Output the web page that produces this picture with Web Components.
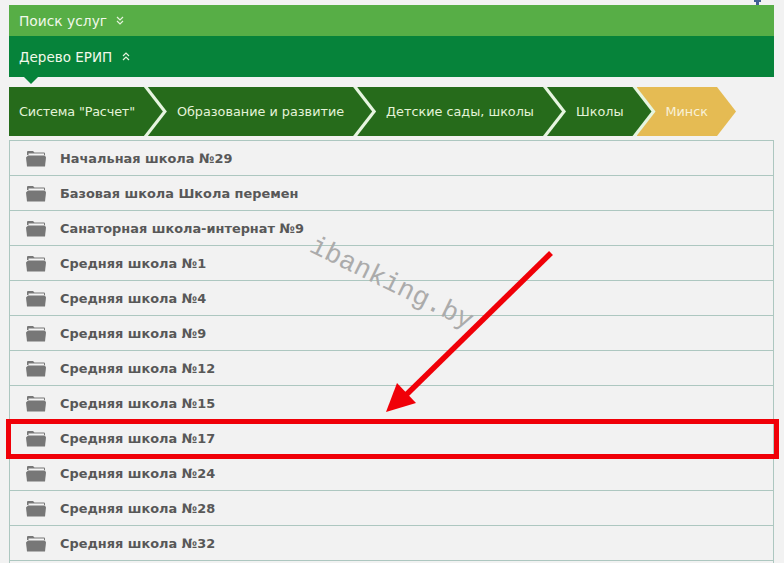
<!DOCTYPE html>
<html lang="ru">
<head>
<meta charset="utf-8">
<title>Дерево ЕРИП</title>
<style>
  html, body { margin: 0; height: 563px; overflow: hidden; background: #f2f2f2; }
  body { font-family: "DejaVu Sans", Verdana, sans-serif; }
</style>
</head>
<body>
<erip-page>
  <erip-bar slot="bars" tone="light" dir="down">Поиск услуг</erip-bar>
  <erip-bar slot="bars" tone="dark" dir="up" pointer>Дерево ЕРИП</erip-bar>
  <erip-crumbs slot="crumbs">
    <erip-crumb first>Система "Расчет"</erip-crumb>
    <erip-crumb>Образование и развитие</erip-crumb>
    <erip-crumb>Детские сады, школы</erip-crumb>
    <erip-crumb>Школы</erip-crumb>
    <erip-crumb current>Минск</erip-crumb>
  </erip-crumbs>
  <erip-list slot="list">
    <erip-row>Начальная школа №29</erip-row>
    <erip-row>Базовая школа Школа перемен</erip-row>
    <erip-row>Санаторная школа-интернат №9</erip-row>
    <erip-row>Средняя школа №1</erip-row>
    <erip-row>Средняя школа №4</erip-row>
    <erip-row>Средняя школа №9</erip-row>
    <erip-row>Средняя школа №12</erip-row>
    <erip-row>Средняя школа №15</erip-row>
    <erip-row>Средняя школа №17</erip-row>
    <erip-row>Средняя школа №24</erip-row>
    <erip-row>Средняя школа №28</erip-row>
    <erip-row>Средняя школа №32</erip-row>
  </erip-list>
</erip-page>

<script>
const pageTemplate = document.createElement("template");
pageTemplate.innerHTML = `
<style>
  :host { display: block; position: relative; height: 563px; overflow: hidden; padding: 5px 10px 0 9px; box-sizing: border-box; }
  .bars { display: flex; flex-direction: column; }
  .crumbs { margin-top: 10px; }
  .list { margin-top: 4px; }
  svg.marks { position: absolute; left: 0; top: 0; width: 784px; height: 563px; pointer-events: none; }
  .stamp {
    position: absolute; left: 317px; top: 233px; margin: 0;
    font: 27px/1 "Liberation Mono", monospace; color: #ababab;
    transform: rotate(26deg); transform-origin: 0 0;
    white-space: nowrap;
  }
  .frame { position: absolute; left: 6px; top: 419px; width: 773px; height: 40px; box-sizing: border-box; border: 5px solid #f00008; }
  .corner { position: absolute; left: 753px; top: 0; width: 9px; height: 5px; }
</style>
<svg class="corner" viewBox="0 0 9 5"><path d="M1 0h7v2H6v3H3V2H1z" fill="#3f5f93"/></svg>
<div class="bars"><slot name="bars"></slot></div>
<div class="crumbs"><slot name="crumbs"></slot></div>
<div class="list"><slot name="list"></slot></div>
<p class="stamp">ibanking.by</p>
<div class="frame"></div>
<svg class="marks" viewBox="0 0 784 563">
  <path d="M551 253L406 395" stroke="#f00008" stroke-width="5.500" fill="none"/>
  <path d="M386 412L397 383L416 403Z" fill="#f00008"/>
</svg>
`;

class EripPage extends HTMLElement {
  constructor() {
    super();
    this.attachShadow({ mode: "open" });
    this.shadowRoot.append(pageTemplate.content.cloneNode(true));
  }
}

const barTemplate = document.createElement("template");
barTemplate.innerHTML = `
<style>
  :host { display: flex; align-items: center; gap: 9px; position: relative; box-sizing: border-box; padding-left: 10px; color: #f1f8ea; font-size: 13.5px; }
  :host([tone="light"]) { height: 31px; background: #57ae46; font-size: 13.8px; }
  :host([tone="dark"]) { height: 41px; background: #06833a; gap: 10px; }
  :host([pointer])::after {
    content: ""; position: absolute; left: 15px; top: 100%;
    border: 7px solid transparent; border-top-color: #06833a; border-bottom: 0;
  }
  svg { width: 8px; height: 9px; fill: none; stroke: #e6f3dc; stroke-width: 1.2; }
  :host([dir="up"]) svg { transform: scaleY(-1); }
</style>
<span><slot></slot></span>
<svg viewBox="0 0 8 9"><path d="M1 1l3 3 3-3M1 5l3 3 3-3"/></svg>
`;

class EripBar extends HTMLElement {
  constructor() {
    super();
    this.attachShadow({ mode: "open" });
    this.shadowRoot.append(barTemplate.content.cloneNode(true));
  }
}

const crumbsTemplate = document.createElement("template");
crumbsTemplate.innerHTML = `
<style>
  :host { display: flex; height: 49px; }
</style>
<slot></slot>
`;

class EripCrumbs extends HTMLElement {
  constructor() {
    super();
    this.attachShadow({ mode: "open" });
    this.shadowRoot.append(crumbsTemplate.content.cloneNode(true));
    this.shadowRoot.querySelector("slot").addEventListener("slotchange", (e) => {
      const items = e.target.assignedElements();
      items.forEach((item, i) => (item.style.zIndex = items.length - i));
    });
  }
}

const crumbTemplate = document.createElement("template");
crumbTemplate.innerHTML = `
<style>
  :host {
    --arrow: polygon(0 0, calc(100% - 19px) 0, 100% 50%, calc(100% - 19px) 100%, 0 100%);
    display: flex; align-items: center; position: relative; box-sizing: border-box;
    height: 49px; margin-left: -19px; padding: 0 32px 0 29px;
    font-size: 12.8px; color: #e4f3d8; white-space: nowrap;
    background: #e6f5e0; clip-path: var(--arrow);
  }
  :host([first]) { margin-left: 0; padding-left: 10px; letter-spacing: -0.16px; }
  :host([current]) { background: #e5bb53; color: #f8f1d8; padding-right: 28px; }
  :host::before {
    content: ""; position: absolute; inset: 0 4px 0 0;
    background: #266b1b; clip-path: var(--arrow);
  }
  :host([current])::before { background: #e5bb53; }
  span { position: relative; }
</style>
<span><slot></slot></span>
`;

class EripCrumb extends HTMLElement {
  constructor() {
    super();
    this.attachShadow({ mode: "open" });
    this.shadowRoot.append(crumbTemplate.content.cloneNode(true));
  }
}

const listTemplate = document.createElement("template");
listTemplate.innerHTML = `
<style>
  :host { display: block; border-left: 1px solid #adc7c0; border-right: 1px solid #adc7c0; border-top: 1px solid #adc7c0; height: 423px; }
</style>
<slot></slot>
`;

class EripList extends HTMLElement {
  constructor() {
    super();
    this.attachShadow({ mode: "open" });
    this.shadowRoot.append(listTemplate.content.cloneNode(true));
  }
}

const rowTemplate = document.createElement("template");
rowTemplate.innerHTML = `
<style>
  :host {
    display: flex; align-items: center; gap: 13px; box-sizing: border-box;
    height: 35px; padding-left: 15px; border-bottom: 1px solid #adc7c0;
    font-size: 12.9px; font-weight: bold; color: #585858; white-space: nowrap;
  }
  svg { width: 22px; height: 17px; flex: none; }
</style>
<svg viewBox="0 0 22 17"><path d="M2 5V2q0-1 1-1h5l1.500 1.500H19q1 0 1 1V5z" fill="#777"/><path d="M3.500 3.500H19V6H3.500z" fill="#f4f4f4"/><path d="M1 7.500L3 5.500H20L21 7.500L20 16.500H2z" fill="#777"/></svg>
<span><slot></slot></span>
`;

class EripRow extends HTMLElement {
  constructor() {
    super();
    this.attachShadow({ mode: "open" });
    this.shadowRoot.append(rowTemplate.content.cloneNode(true));
  }
}

customElements.define("erip-page", EripPage);
customElements.define("erip-bar", EripBar);
customElements.define("erip-crumbs", EripCrumbs);
customElements.define("erip-crumb", EripCrumb);
customElements.define("erip-list", EripList);
customElements.define("erip-row", EripRow);
</script>
</body>
</html>
